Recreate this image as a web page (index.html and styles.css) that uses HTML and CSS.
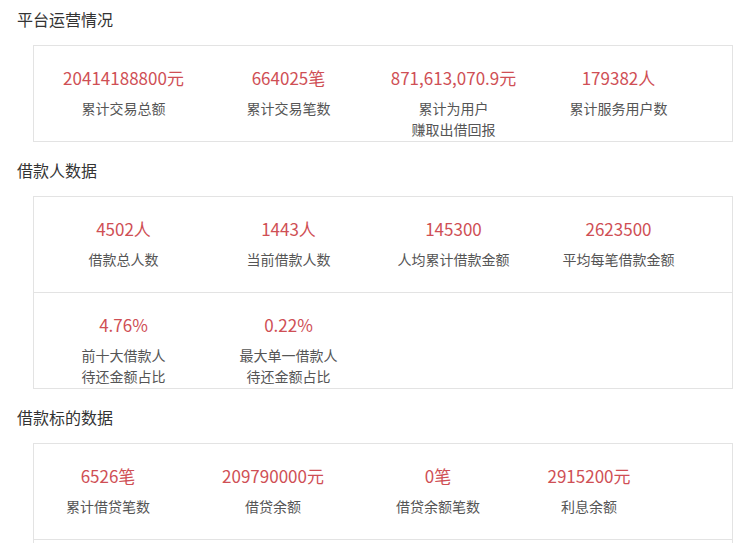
FILE: index.html
```html
<!DOCTYPE html>
<html lang="zh-CN">
<head>
<meta charset="utf-8">
<title>平台运营情况</title>
<link rel="stylesheet" href="styles.css">
</head>
<body>
<section class="section">
  <h2 class="title">平台运营情况</h2>
  <div class="box">
    <div class="row">
      <div class="cell"><div class="val">20414188800元</div><div class="lbl">累计交易总额</div></div>
      <div class="cell"><div class="val">664025笔</div><div class="lbl">累计交易笔数</div></div>
      <div class="cell"><div class="val">871,613,070.9元</div><div class="lbl">累计为用户<br>赚取出借回报</div></div>
      <div class="cell"><div class="val">179382人</div><div class="lbl">累计服务用户数</div></div>
    </div>
  </div>
</section>
<section class="section">
  <h2 class="title">借款人数据</h2>
  <div class="box">
    <div class="row">
      <div class="cell"><div class="val">4502人</div><div class="lbl">借款总人数</div></div>
      <div class="cell"><div class="val">1443人</div><div class="lbl">当前借款人数</div></div>
      <div class="cell"><div class="val">145300</div><div class="lbl">人均累计借款金额</div></div>
      <div class="cell"><div class="val">2623500</div><div class="lbl">平均每笔借款金额</div></div>
    </div>
    <div class="row">
      <div class="cell"><div class="val">4.76%</div><div class="lbl">前十大借款人<br>待还金额占比</div></div>
      <div class="cell"><div class="val">0.22%</div><div class="lbl">最大单一借款人<br>待还金额占比</div></div>
    </div>
  </div>
</section>
<section class="section">
  <h2 class="title">借款标的数据</h2>
  <div class="box box-open">
    <div class="row row-alt">
      <div class="cell"><div class="val">6526笔</div><div class="lbl">累计借贷笔数</div></div>
      <div class="cell"><div class="val">209790000元</div><div class="lbl">借贷余额</div></div>
      <div class="cell"><div class="val">0笔</div><div class="lbl">借贷余额笔数</div></div>
      <div class="cell"><div class="val">2915200元</div><div class="lbl">利息余额</div></div>
    </div>
    <div class="row row-alt"></div>
  </div>
</section>
</body>
</html>
```
FILE: styles.css
```css
html, body {
  margin: 0;
  padding: 0;
  background: #fff;
}
body {
  padding-top: 9px;
  font-family: "Microsoft YaHei", "Noto Sans CJK SC", "Noto Sans", sans-serif;
  color: #333;
}
.section + .section {
  margin-top: 18px;
}
.title {
  margin: 0 0 16px 17px;
  font-size: 16px;
  font-weight: normal;
  line-height: 20px;
  color: #333;
}
.box {
  margin-left: 33px;
  width: 698px;
  border: 1px solid #e3e3e3;
}
.box-open {
  border-bottom: none;
  height: 120px;
  overflow: hidden;
}
.row {
  display: grid;
  grid-template-columns: repeat(4, 165px);
  padding-left: 7px;
  height: 95px;
}
.row + .row {
  border-top: 1px solid #e3e3e3;
}
.row-alt {
  padding-left: 0;
  grid-template-columns: 148px 182px 148px 154px;
}
.cell {
  text-align: center;
  padding-top: 22px;
}
.val {
  font-size: 17px;
  line-height: 20px;
  color: #cf4f55;
}
.lbl {
  margin-top: 10px;
  font-size: 14px;
  line-height: 21px;
  color: #555;
}
```
